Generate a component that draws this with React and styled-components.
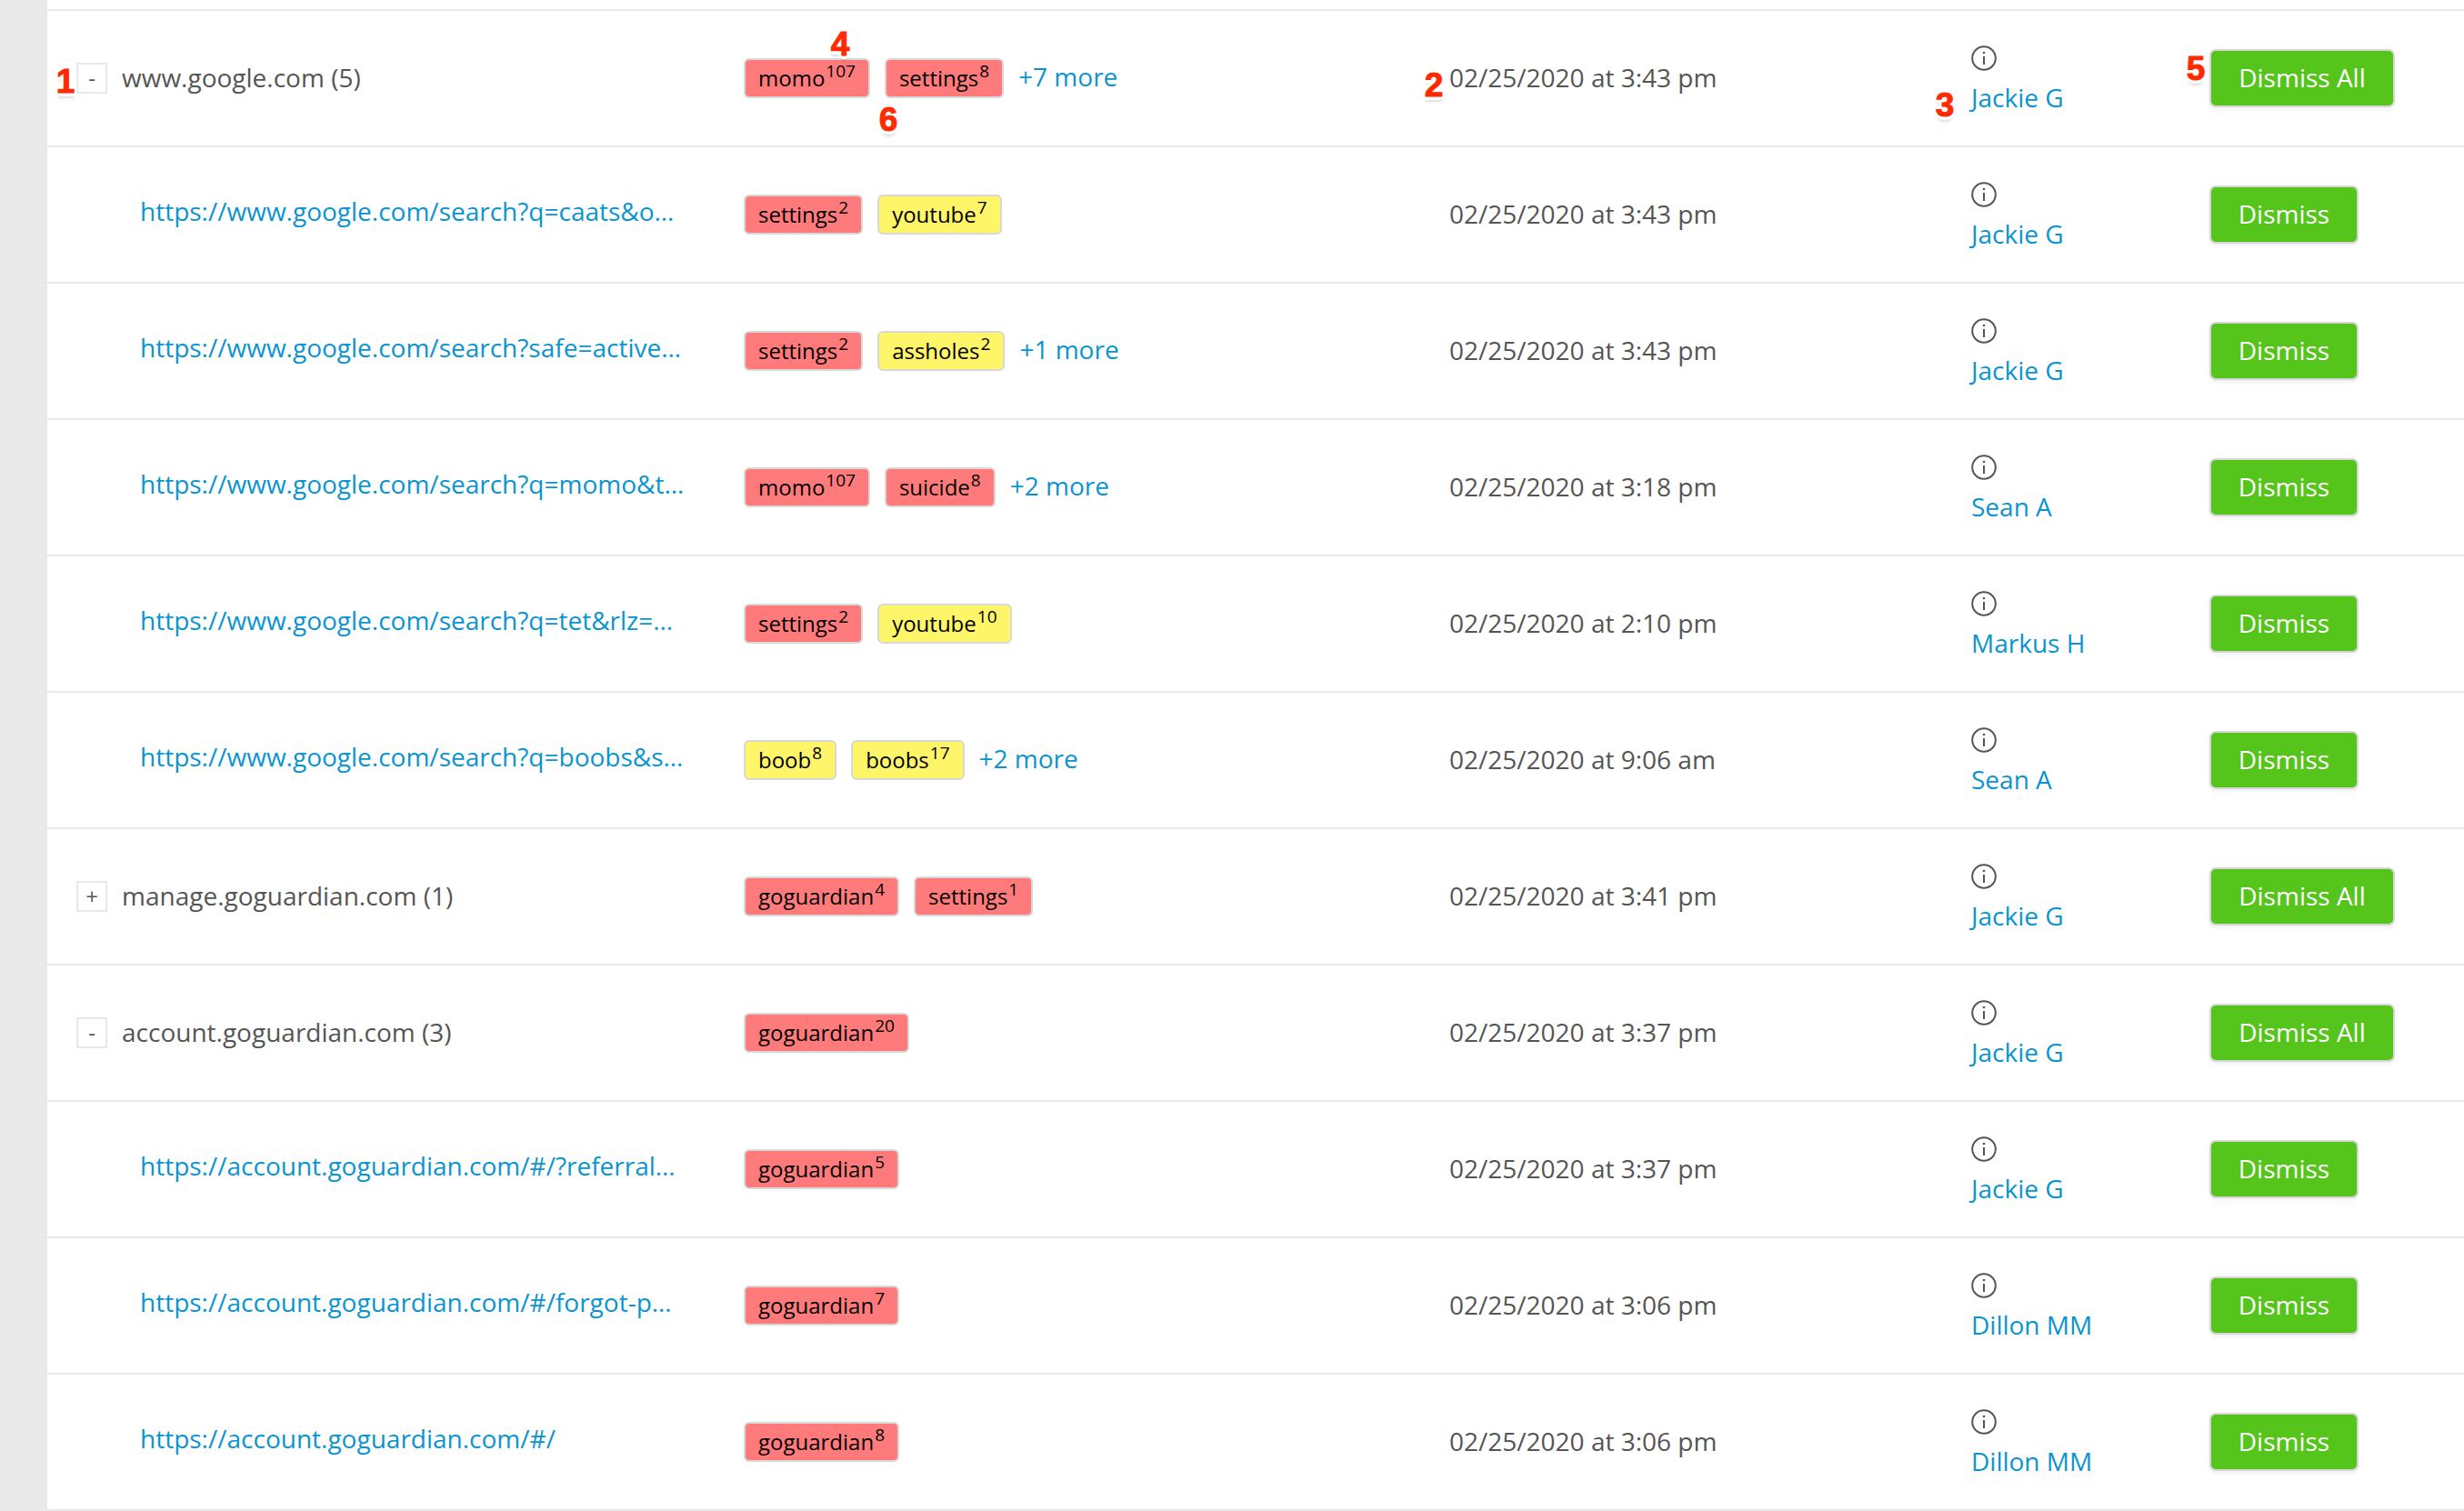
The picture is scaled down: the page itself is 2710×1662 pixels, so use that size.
import styled, { createGlobalStyle } from "styled-components";

const GlobalStyle = createGlobalStyle`
    html, body {
        margin: 0;
        padding: 0;
        background: #fff;
        font-family: "Open Sans", "Liberation Sans", sans-serif;
    }
`;

const Page = styled.div`
    display: flex;
    width: 2710px;
    height: 1662px;
    overflow: hidden;
`;
const Sidebar = styled.div`
    width: 52px;
    flex: none;
    background: #e9e9e9;
`;
const Table = styled.div`
    flex: 1;
    padding-top: 10px;
`;
const Row = styled.div`
    display: grid;
    grid-template-columns: 766px 776px 574px 262px 1fr;
    align-items: center;
    height: 148px;
    border-top: 2px solid #e8e8e8;
    font-size: 28px;
    color: #555;
    &:last-child {
        border-bottom: 2px solid #e8e8e8;
    }
`;
const GroupCell = styled.div`
    display: flex;
    align-items: center;
    gap: 16px;
    padding-left: 32px;
`;
const Toggle = styled.span`
    width: 34px;
    height: 34px;
    box-sizing: border-box;
    border: 2px solid #e8e8e8;
    display: flex;
    align-items: center;
    justify-content: center;
    font-size: 24px;
    line-height: 1;
`;
const GroupName = styled.span`
    margin-top: -2px;
`;
const UrlCell = styled.a`
    padding-left: 102px;
    margin-top: -8px;
    color: #0a94d0;
    white-space: nowrap;
`;
const TagCell = styled.div`
    display: flex;
    align-items: center;
    gap: 16px;
`;
const Tag = styled.span`
    height: 44px;
    box-sizing: border-box;
    display: inline-flex;
    align-items: center;
    padding: 0 14px 2px;
    border: 2px solid #d8d8d8;
    border-radius: 6px;
    background: ${(p) => (p.$level === "high" ? "#ff7b7b" : "#fff568")};
    color: #000;
    font-size: 24px;
`;
const Count = styled.sup`
    font-size: 19px;
    line-height: 0;
    margin-top: -14px;
    margin-left: 1px;
`;
const More = styled.a`
    color: #0a94d0;
    margin-top: -4px;
`;
const DateCell = styled.div`
    white-space: nowrap;
    margin-top: -2px;
`;
const UserCell = styled.div`
    display: flex;
    flex-direction: column;
    align-items: flex-start;
    gap: 9px;
    margin-top: 5px;
`;
const InfoIcon = styled.svg`
    width: 28px;
    height: 28px;
    display: block;
`;
const UserName = styled.a`
    color: #0a94d0;
    line-height: 40px;
`;
const DismissButton = styled.button`
    height: 64px;
    width: ${(p) => (p.$all ? "204px" : "164px")};
    box-sizing: border-box;
    padding: 0 0 2px;
    border: 2px solid #d6d6d6;
    border-radius: 7px;
    background: #55c41b;
    color: #fff;
    font-family: inherit;
    font-size: 28px;
    box-shadow: 0 3px 4px rgba(0, 0, 0, 0.05);
`;
const Marker = styled.span`
    position: absolute;
    left: ${(p) => p.$x}px;
    top: ${(p) => p.$y}px;
    transform: translate(-50%, -50%);
    font-family: "Liberation Sans", sans-serif;
    font-weight: bold;
    font-size: 37px;
    line-height: 1;
    color: #ff2a00;
    -webkit-text-stroke: 1px #ff2a00;
    text-shadow: -3px 0 0 #fff, 3px 0 0 #fff, 0 -3px 0 #fff, 0 4px 0 #fff,
        -3px -3px 0 #fff, 3px -3px 0 #fff, -3px 3px 0 #fff, 3px 3px 0 #fff,
        0 6px 3px rgba(0, 0, 0, 0.14);
`;

const rows = [
    { group: "www.google.com (5)", open: true, tags: [["momo", 107, "high"], ["settings", 8, "high"]], more: 7, date: "02/25/2020 at 3:43 pm", user: "Jackie G" },
    { url: "https://www.google.com/search?q=caats&o…", tags: [["settings", 2, "high"], ["youtube", 7, "low"]], date: "02/25/2020 at 3:43 pm", user: "Jackie G" },
    { url: "https://www.google.com/search?safe=active…", tags: [["settings", 2, "high"], ["assholes", 2, "low"]], more: 1, date: "02/25/2020 at 3:43 pm", user: "Jackie G" },
    { url: "https://www.google.com/search?q=momo&t…", tags: [["momo", 107, "high"], ["suicide", 8, "high"]], more: 2, date: "02/25/2020 at 3:18 pm", user: "Sean A" },
    { url: "https://www.google.com/search?q=tet&rlz=…", tags: [["settings", 2, "high"], ["youtube", 10, "low"]], date: "02/25/2020 at 2:10 pm", user: "Markus H" },
    { url: "https://www.google.com/search?q=boobs&s…", tags: [["boob", 8, "low"], ["boobs", 17, "low"]], more: 2, date: "02/25/2020 at 9:06 am", user: "Sean A" },
    { group: "manage.goguardian.com (1)", open: false, tags: [["goguardian", 4, "high"], ["settings", 1, "high"]], date: "02/25/2020 at 3:41 pm", user: "Jackie G" },
    { group: "account.goguardian.com (3)", open: true, tags: [["goguardian", 20, "high"]], date: "02/25/2020 at 3:37 pm", user: "Jackie G" },
    { url: "https://account.goguardian.com/#/?referral…", tags: [["goguardian", 5, "high"]], date: "02/25/2020 at 3:37 pm", user: "Jackie G" },
    { url: "https://account.goguardian.com/#/forgot-p…", tags: [["goguardian", 7, "high"]], date: "02/25/2020 at 3:06 pm", user: "Dillon MM" },
    { url: "https://account.goguardian.com/#/", tags: [["goguardian", 8, "high"]], date: "02/25/2020 at 3:06 pm", user: "Dillon MM" },
];

const markers = [
    ["1", 72, 89],
    ["2", 1577, 93],
    ["3", 2139, 115],
    ["4", 924, 48],
    ["5", 2415, 75],
    ["6", 977, 131],
];

const Info = () => (
    <InfoIcon viewBox="0 0 28 28" fill="none" stroke="#555">
        <circle cx="14" cy="14" r="12.8" strokeWidth="2" />
        <path d="M14 12v9" strokeWidth="2" />
        <circle cx="14" cy="8" r="1.3" fill="#555" stroke="none" />
    </InfoIcon>
);

const App = () => {
    return (
        <Page>
            <GlobalStyle />
            <Sidebar />
            <Table>
                {rows.map((row, i) => (
                    <Row key={i}>
                        {row.group ? (
                            <GroupCell>
                                <Toggle>{row.open ? "-" : "+"}</Toggle>
                                <GroupName>{row.group}</GroupName>
                            </GroupCell>
                        ) : (
                            <UrlCell>{row.url}</UrlCell>
                        )}
                        <TagCell>
                            {row.tags.map(([name, count, level]) => (
                                <Tag key={name} $level={level}>
                                    {name}
                                    <Count>{count}</Count>
                                </Tag>
                            ))}
                            {row.more && <More>+{row.more} more</More>}
                        </TagCell>
                        <DateCell>{row.date}</DateCell>
                        <UserCell>
                            <Info />
                            <UserName>{row.user}</UserName>
                        </UserCell>
                        <div>
                            <DismissButton $all={!!row.group}>
                                {row.group ? "Dismiss All" : "Dismiss"}
                            </DismissButton>
                        </div>
                    </Row>
                ))}
            </Table>
            {markers.map(([label, x, y]) => (
                <Marker key={label} $x={x} $y={y}>
                    {label}
                </Marker>
            ))}
        </Page>
    );
};

export default App;
